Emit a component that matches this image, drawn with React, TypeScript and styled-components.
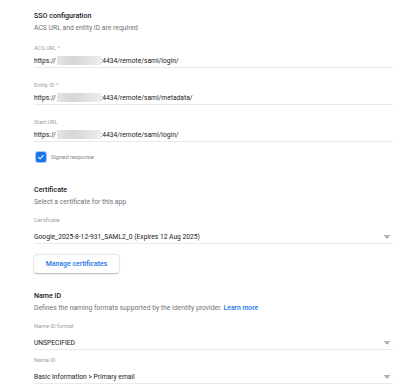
import React from "react";
import styled, { createGlobalStyle } from "styled-components";

const Global = createGlobalStyle`
  html, body { margin: 0; padding: 0; background: #fff; }
  body { font-family: Roboto, "Noto Sans", Arial, sans-serif; -webkit-font-smoothing: antialiased; }
`;

const Page = styled.div`
  width: 400px;
  height: 392px;
  box-sizing: border-box;
  padding: 10px 7px 0 34px;
  display: flex;
  flex-direction: column;
  overflow: hidden;
`;

const Title = styled.div<{ $mt?: number }>`
  margin-top: ${(p) => p.$mt ?? 0}px;
  font-size: 7.1px;
  line-height: 12px;
  font-weight: 500;
  color: #202124;
`;

const Desc = styled.div`
  font-size: 6.8px;
  line-height: 12px;
  color: #6f7377;
`;

const Field = styled.div<{ $mt: number }>`
  margin-top: ${(p) => p.$mt}px;
  display: flex;
  flex-direction: column;
`;

const Label = styled.div`
  font-size: 5.6px;
  line-height: 10px;
  color: #9aa0a6;
`;

const Value = styled.div<{ $mt: number }>`
  margin-top: ${(p) => p.$mt}px;
  height: 13px;
  display: flex;
  align-items: center;
  justify-content: space-between;
  font-size: 6.7px;
  color: #202124;
  border-bottom: 1px solid #e8eaed;
  box-sizing: content-box;
`;

const ValueText = styled.span`
  display: flex;
  align-items: center;
  white-space: nowrap;
`;

const Redacted = styled.span`
  display: inline-block;
  width: 44px;
  height: 9px;
  margin: 0 0 0 1px;
  background: linear-gradient(90deg, #e3e3e3, #d6d6d6 40%, #e6e6e6 80%, #eeeeee);
  filter: blur(0.6px);
`;

const Arrow = styled.svg`
  width: 6px;
  height: 4px;
  margin-right: 3px;
  flex: none;
`;

const CheckRow = styled.label`
  margin-top: 10px;
  display: flex;
  align-items: center;
  gap: 5px;
  font-size: 5.8px;
  color: #80868b;
  padding-left: 2px;
`;

const Box = styled.span`
  width: 10px;
  height: 10px;
  border-radius: 2px;
  background: #1a73e8;
  box-shadow: 0 0 0 1px #aac7f4;
  display: flex;
  align-items: center;
  justify-content: center;
`;

const Button = styled.button`
  margin-top: 11px;
  align-self: flex-start;
  width: 85px;
  height: 18px;
  border: none;
  border-radius: 3px;
  background: #fff;
  box-shadow: 0 0.5px 1.5px rgba(60, 64, 67, 0.35), 0 0 0 0.5px rgba(60, 64, 67, 0.1);
  color: #1a73e8;
  font-family: Roboto, Arial, sans-serif;
  font-size: 6.9px;
  font-weight: 500;
  padding: 0;
`;

const Link = styled.a`
  color: #1a73e8;
  font-weight: 500;
  text-decoration: none;
`;

const DropArrow = () => (
  <Arrow viewBox="0 0 6 4">
    <rect x="0" y="0" width="6" height="0.8" fill="#9aa0a6" />
    <path d="M0.5 1.2 L5.5 1.2 L3 3.8 Z" fill="#9aa0a6" />
  </Arrow>
);

const Url = ({ path }: { path: string }) => (
  <ValueText>
    https://
    <Redacted />
    {path}
  </ValueText>
);

export default function App() {
  return (
    <>
      <Global />
      <Page>
        <Title>SSO configuration</Title>
        <Desc>ACS URL and entity ID are required</Desc>

        <Field $mt={9}>
          <Label>ACS URL *</Label>
          <Value $mt={1}>
            <Url path=":4434/remote/saml/login/" />
          </Value>
        </Field>
        <Field $mt={12}>
          <Label>Entity ID *</Label>
          <Value $mt={1}>
            <Url path=":4434/remote/saml/metadata/" />
          </Value>
        </Field>
        <Field $mt={12}>
          <Label>Start URL</Label>
          <Value $mt={1}>
            <Url path=":4434/remote/saml/login/" />
          </Value>
        </Field>

        <CheckRow>
          <Box>
            <svg width="8" height="8" viewBox="0 0 24 24">
              <path d="M4 12.5l5 5L20 6.5" stroke="#fff" strokeWidth="3.2" fill="none" />
            </svg>
          </Box>
          Signed response
        </CheckRow>

        <Title $mt={22}>Certificate</Title>
        <Desc>Select a certificate for this app</Desc>
        <Field $mt={7}>
          <Label>Certificate</Label>
          <Value $mt={5}>
            <ValueText>Google_2025-8-12-931_SAML2_0 (Expires 12 Aug 2025)</ValueText>
            <DropArrow />
          </Value>
        </Field>

        <Button>Manage certificates</Button>

        <Title $mt={17}>Name ID</Title>
        <Desc>
          Defines the naming formats supported by the identity provider. <Link>Learn more</Link>
        </Desc>
        <Field $mt={7}>
          <Label>Name ID format</Label>
          <Value $mt={5}>
            <ValueText>UNSPECIFIED</ValueText>
            <DropArrow />
          </Value>
        </Field>
        <Field $mt={5}>
          <Label>Name ID</Label>
          <Value $mt={5}>
            <ValueText>Basic Information &gt; Primary email</ValueText>
            <DropArrow />
          </Value>
        </Field>
      </Page>
    </>
  );
}
